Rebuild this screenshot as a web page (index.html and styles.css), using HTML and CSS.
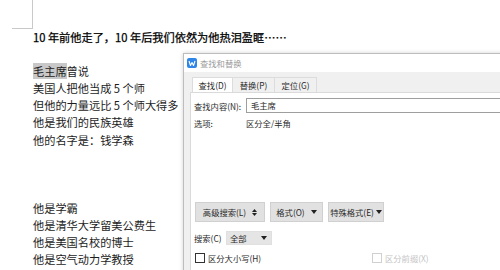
FILE: index.html
```html
<!doctype html>
<html>
<head>
  <meta charset="utf-8">
  <link rel="stylesheet" href="styles.css">
</head>
<body>
  <div class="page">
    <div class="corner"></div>
    <div class="doc">
      <p class="lead">10 年前他走了，10 年后我们依然为他热泪盈眶……</p>
      <p>&nbsp;</p>
      <p><span class="hit">毛主席</span>曾说</p>
      <p>美国人把他当成 5 个师</p>
      <p>但他的力量远比 5 个师大得多</p>
      <p>他是我们的民族英雄</p>
      <p>他的名字是：钱学森</p>
      <p>&nbsp;</p>
      <p>&nbsp;</p>
      <p>&nbsp;</p>
      <p>他是学霸</p>
      <p>他是清华大学留美公费生</p>
      <p>他是美国名校的博士</p>
      <p>他是空气动力学教授</p>
      <p>他是中国航天事业的奠基人</p>
    </div>
  </div>

  <div class="dialog">
    <div class="titlebar">
      <svg class="app-icon" width="10" height="10" viewBox="0 0 10 10">
        <rect width="10" height="10" rx="2" fill="#2f86e8"/>
        <polyline points="2,3 3.5,7.5 5,4.5 6.5,7.5 8,3" fill="none" stroke="#fff" stroke-width="1.1" stroke-linejoin="round"/>
      </svg>
      <span class="title">查找和替换</span>
    </div>
    <div class="body">
      <div class="tabs">
        <div class="tab active">查找(D)</div>
        <div class="tab">替换(P)</div>
        <div class="tab">定位(G)</div>
      </div>
      <div class="panel">
        <div class="row find">
          <span class="label">查找内容(N):</span>
          <div class="input">毛主席</div>
        </div>
        <div class="row opts">
          <span class="label">选项:</span>
          <span>区分全/半角</span>
        </div>
        <div class="row buttons">
          <div class="btn w70">高级搜索(L)
            <svg width="5" height="7" viewBox="0 0 5 7"><polygon points="0,3 2.5,0 5,3" fill="#222"/><polygon points="0,4 2.5,7 5,4" fill="#222"/></svg>
          </div>
          <div class="btn w53">格式(O)
            <svg width="6" height="4" viewBox="0 0 6 4"><polygon points="0,0 6,0 3,4" fill="#222"/></svg>
          </div>
          <div class="btn w56">特殊格式(E)
            <svg width="6" height="4" viewBox="0 0 6 4"><polygon points="0,0 6,0 3,4" fill="#222"/></svg>
          </div>
        </div>
        <div class="row search">
          <span class="label short">搜索(C)</span>
          <div class="select">全部
            <svg width="6" height="4" viewBox="0 0 6 4"><polygon points="0,0 6,0 3,4" fill="#222"/></svg>
          </div>
        </div>
        <div class="row checks">
          <label class="check first"><span class="box"></span>区分大小写(H)</label>
          <label class="check disabled"><span class="box"></span>区分前缀(X)</label>
        </div>
      </div>
    </div>
  </div>
</body>
</html>
```
FILE: styles.css
```css
body {
  margin: 0;
  background: #fff;
  font-family: "Noto Sans CJK SC", "Noto Sans", sans-serif;
  overflow: hidden;
}
.page {
  width: 500px;
  height: 270px;
  overflow: hidden;
}
.corner {
  margin-left: 12px;
  width: 20px;
  height: 28px;
  border-right: 1px solid #c9c9c9;
  border-bottom: 1px solid #c9c9c9;
}
.doc {
  padding-left: 33px;
  color: #1c1c1c;
  font-size: 11.2px;
  line-height: 17.1px;
}
.doc p {
  margin: 0;
  white-space: nowrap;
}
.doc .lead {
  color: #000;
  -webkit-text-stroke: 0.25px #000;
}
.hit {
  background: #c8c8c8;
}

.dialog {
  position: absolute;
  left: 183px;
  top: 53px;
  width: 340px;
  height: 240px;
  background: #fff;
  border: 1px solid #bdbdbd;
  box-shadow: 0 0 4px rgba(0, 0, 0, 0.18);
  font-size: 8.3px;
  color: #2a2a2a;
  white-space: nowrap;
}
.titlebar {
  height: 18px;
  display: flex;
  align-items: center;
  padding-left: 3px;
  gap: 3px;
}
.title {
  color: #9a9a9a;
}
.body {
  background: #f0f0f0;
  padding-left: 6px;
  height: 100%;
}
.tabs {
  display: flex;
  padding-top: 5px;
  padding-left: 2px;
}
.tab {
  height: 15px;
  line-height: 15px;
  text-align: center;
  background: #f0f0f0;
  border: 1px solid #dcdcdc;
  border-bottom: none;
  box-sizing: border-box;
  width: 42px;
}
.tab.active {
  background: #fff;
  width: 41px;
}
.tab + .tab {
  border-left: none;
}
.panel {
  background: #fff;
  border: 1px solid #dadada;
  height: 200px;
  padding-left: 3px;
}
.row {
  display: flex;
  align-items: center;
}
.label {
  width: 52px;
}
.find {
  margin-top: 5px;
  height: 15px;
}
.input {
  flex: 1;
  height: 15px;
  line-height: 13px;
  box-sizing: border-box;
  border: 1px solid #9e9e9e;
  padding-left: 4px;
}
.opts {
  margin-top: 3px;
  height: 14px;
}
.buttons {
  margin-top: 72px;
  gap: 5px;
  padding-left: 1px;
}
.btn {
  height: 20px;
  box-sizing: border-box;
  background: #e1e1e1;
  border: 1px solid #d0d0d0;
  display: flex;
  align-items: center;
  justify-content: center;
  gap: 6px;
}
.w70 { width: 70px; }
.w53 { width: 53px; }
.w56 { width: 56px; gap: 2px; }
.search {
  margin-top: 9px;
}
.label.short {
  width: 32px;
}
.select {
  width: 46px;
  height: 14px;
  box-sizing: border-box;
  background: #e5e5e5;
  border: 1px solid #e0e0e0;
  display: flex;
  align-items: center;
  justify-content: space-between;
  padding: 0 4px 0 3px;
}
.checks {
  margin-top: 6px;
  height: 14px;
  padding-left: 1px;
}
.check {
  display: flex;
  align-items: center;
  gap: 3px;
}
.check.first {
  width: 177px;
}
.check .box {
  width: 10px;
  height: 10px;
  box-sizing: border-box;
  border: 1px solid #333;
  background: #fff;
}
.check.disabled {
  color: #c4c4c4;
}
.check.disabled .box {
  border-color: #d0d0d0;
}
```
